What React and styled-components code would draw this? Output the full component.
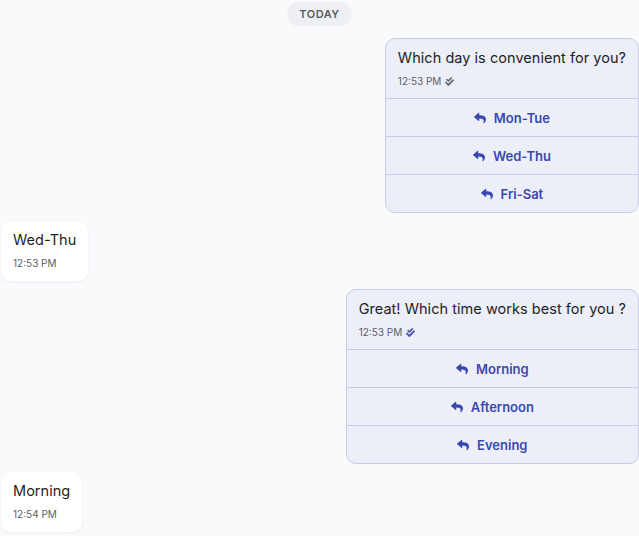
import React from 'react'
import styled, { createGlobalStyle } from 'styled-components'
import { FaReply, FaCheckDouble } from 'react-icons/fa'

const Global = createGlobalStyle`
  html, body { margin: 0; padding: 0; background: #f9fafc; }
  body { font-family: Inter, "Noto Sans", sans-serif; color: #1e1f24; }
`

const Chat = styled.div`
  display: flex;
  flex-direction: column;
  width: 639px;
  height: 536px;
  overflow: hidden;
`

const DayPill = styled.div`
  align-self: center;
  margin: 2px 0 12px;
  padding: 0 12px;
  height: 24px;
  line-height: 24px;
  border-radius: 12px;
  background: #eeeff2;
  color: #5a5c63;
  font-size: 11px;
  font-weight: 600;
  letter-spacing: 0.5px;
`

const Row = styled.div`
  display: flex;
  justify-content: ${p => (p.out ? 'flex-end' : 'flex-start')};
  margin-bottom: 8px;
  padding-left: 1px;
`

const OutBubble = styled.div`
  background: #eceef8;
  border: 1px solid #c9cce8;
  border-radius: 10px;
  overflow: hidden;
`

const InBubble = styled.div`
  background: #ffffff;
  border-radius: 10px;
  box-shadow: 0 1px 3px rgba(30, 35, 60, 0.06);
  padding: 9px 12px 12px 12px;
`

const Body = styled.div`
  padding: 9px 12px 11px 12px;
`

const Text = styled.div`
  font-size: 14.5px;
  line-height: 20px;
  letter-spacing: 0.04px;
  color: #1e1f24;
  white-space: nowrap;
`

const Meta = styled.div`
  display: flex;
  align-items: center;
  gap: 4px;
  margin-top: 7px;
  font-size: 10px;
  color: #5d5f66;
  svg { width: 9px; height: 9px; color: ${p => (p.read ? '#4a56c4' : '#6d6f76')}; }
`

const Option = styled.button`
  display: flex;
  align-items: center;
  justify-content: center;
  gap: 8px;
  width: 100%;
  height: 38px;
  border: 0;
  border-top: 1px solid #c9cce8;
  background: transparent;
  color: #3b48b0;
  font-family: inherit;
  font-size: 13px;
  font-weight: 600;
  cursor: pointer;
  svg { width: 12px; height: 12px; }
`

const Outgoing = ({ text, time, read, options }) => (
  <Row out>
    <OutBubble>
      <Body>
        <Text>{text}</Text>
        <Meta read={read}>
          {time} <FaCheckDouble />
        </Meta>
      </Body>
      {options.map(o => (
        <Option key={o}>
          <FaReply />
          {o}
        </Option>
      ))}
    </OutBubble>
  </Row>
)

const Incoming = ({ text, time }) => (
  <Row>
    <InBubble>
      <Text>{text}</Text>
      <Meta>{time}</Meta>
    </InBubble>
  </Row>
)

export default function App() {
  return (
    <>
      <Global />
      <Chat>
        <DayPill>TODAY</DayPill>
        <Outgoing
          text="Which day is convenient for you?"
          time="12:53 PM"
          options={['Mon-Tue', 'Wed-Thu', 'Fri-Sat']}
        />
        <Incoming text="Wed-Thu" time="12:53 PM" />
        <Outgoing
          text="Great! Which time works best for you ?"
          time="12:53 PM"
          read
          options={['Morning', 'Afternoon', 'Evening']}
        />
        <Incoming text="Morning" time="12:54 PM" />
      </Chat>
    </>
  )
}
